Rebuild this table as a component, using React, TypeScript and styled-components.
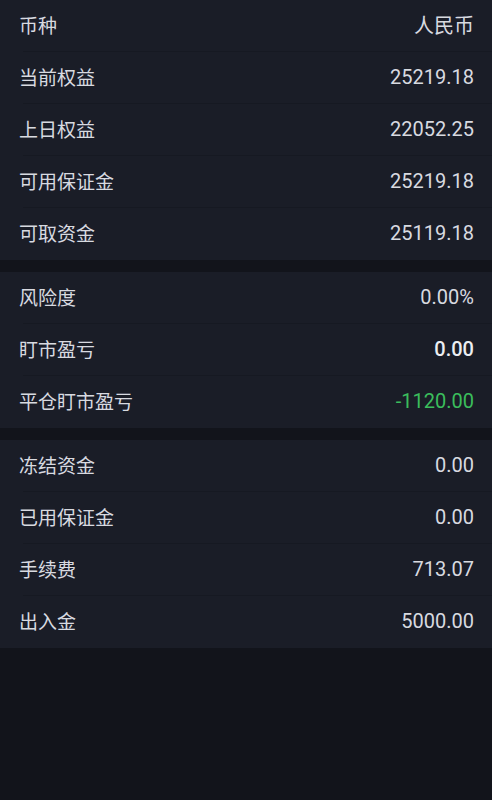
import React from "react";
import styled, { createGlobalStyle } from "styled-components";

const GlobalStyle = createGlobalStyle`
  html, body {
    margin: 0;
    padding: 0;
    background: #12141b;
  }
  body {
    font-family: Roboto, "Noto Sans CJK SC", sans-serif;
    -webkit-font-smoothing: antialiased;
  }
`;

const Page = styled.div`
  display: flex;
  flex-direction: column;
  gap: 12px;
  min-height: 800px;
  background: #12141b;
`;

const Section = styled.div`
  display: flex;
  flex-direction: column;
  background: #1a1d27;
`;

const Row = styled.div`
  display: flex;
  align-items: center;
  justify-content: space-between;
  height: 52px;
  padding: 0 18px 0 19px;
  box-sizing: border-box;
  position: relative;
  &:not(:last-child)::after {
    content: "";
    position: absolute;
    left: 23px;
    right: 0;
    bottom: 0;
    height: 1px;
    background: #161922;
  }
`;

const Label = styled.span`
  font-family: "Noto Sans CJK SC", sans-serif;
  font-size: 19px;
  color: #d8dae0;
  margin-top: -3px;
`;

const Value = styled.span<{ $tone?: "green" | "bright" }>`
  font-family: Roboto, "Noto Sans CJK SC", sans-serif;
  font-size: 20px;
  margin-top: -3px;
  color: ${(p) =>
    p.$tone === "green" ? "#3bbd5c" : p.$tone === "bright" ? "#eceef2" : "#d8dae0"};
  font-weight: ${(p) => (p.$tone === "bright" ? 500 : 400)};
`;

type Item = { label: string; value: string; tone?: "green" | "bright" };

const sections: Item[][] = [
  [
    { label: "币种", value: "人民币" },
    { label: "当前权益", value: "25219.18" },
    { label: "上日权益", value: "22052.25" },
    { label: "可用保证金", value: "25219.18" },
    { label: "可取资金", value: "25119.18" },
  ],
  [
    { label: "风险度", value: "0.00%" },
    { label: "盯市盈亏", value: "0.00", tone: "bright" },
    { label: "平仓盯市盈亏", value: "-1120.00", tone: "green" },
  ],
  [
    { label: "冻结资金", value: "0.00" },
    { label: "已用保证金", value: "0.00" },
    { label: "手续费", value: "713.07" },
    { label: "出入金", value: "5000.00" },
  ],
];

export default function App() {
  return (
    <>
      <GlobalStyle />
      <Page>
        {sections.map((items, i) => (
          <Section key={i}>
            {items.map((it) => (
              <Row key={it.label}>
                <Label>{it.label}</Label>
                <Value $tone={it.tone}>{it.value}</Value>
              </Row>
            ))}
          </Section>
        ))}
      </Page>
    </>
  );
}
